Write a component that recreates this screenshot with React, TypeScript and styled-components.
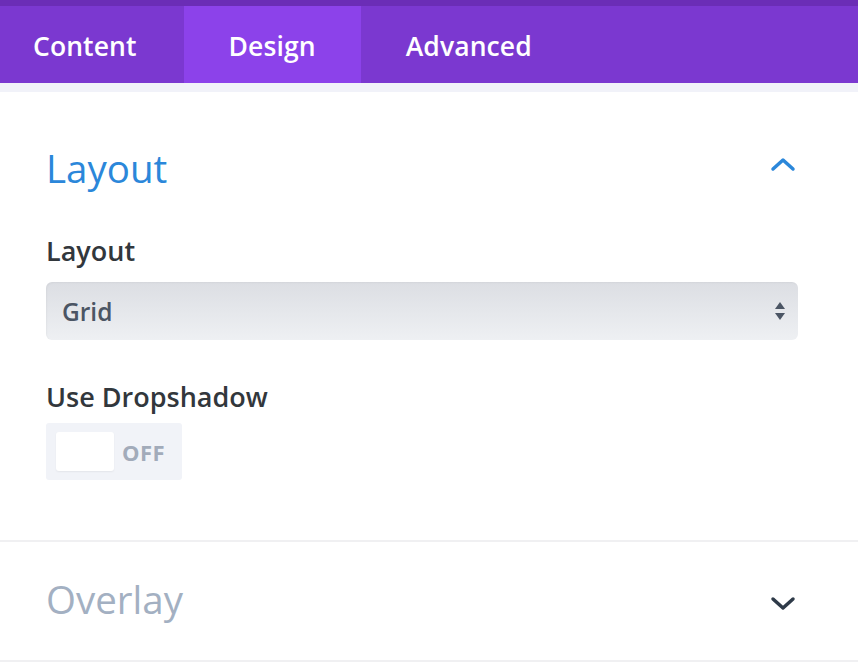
import React from "react";
import styled, { createGlobalStyle } from "styled-components";

const Global = createGlobalStyle`
  html, body { margin: 0; padding: 0; background: #fff; }
  body { font-family: "Open Sans", "Noto Sans", sans-serif; }
  * { box-sizing: border-box; }
`;

const Page = styled.div`
  width: 858px;
  height: 662px;
  overflow: hidden;
  background: #fff;
  display: flex;
  flex-direction: column;
`;

const TopStrip = styled.div`
  height: 6px;
  background: #6b2db6;
`;

const TabBar = styled.div`
  height: 78px;
  background: #7b38d0;
  display: flex;
  align-items: stretch;
`;

const Tab = styled.div<{ $active?: boolean; $first?: boolean }>`
  display: flex;
  align-items: center;
  padding: ${(p) => (p.$first ? "2px 47px 0 33px" : "2px 45px 0 45px")};
  background: ${(p) => (p.$active ? "#8c42ea" : "transparent")};
  color: #fff;
  font-size: 26.5px;
  font-weight: 600;
  letter-spacing: 0.1px;
`;

const Band = styled.div`
  height: 9px;
  background: #f1f2f9;
`;

const Section = styled.div<{ $open?: boolean }>`
  padding: ${(p) => (p.$open ? "50px 60px 60px 46px" : "31px 60px 35px 46px")};
  border-bottom: 2px solid #f0f0f2;
  display: flex;
  flex-direction: column;
`;

const SectionHead = styled.div`
  display: flex;
  align-items: center;
  justify-content: space-between;
`;

const SectionTitle = styled.h2<{ $open?: boolean }>`
  margin: 0;
  font-size: 38.5px;
  font-weight: 400;
  line-height: 52px;
  color: ${(p) => (p.$open ? "#2b87da" : "#a3b0c2")};
`;

const Chevron = styled.svg<{ $down?: boolean }>`
  width: 26px;
  height: 16px;
  margin-right: 2px;
  margin-top: ${(p) => (p.$down ? "9px" : "-8px")};
`;

const Label = styled.div`
  font-size: 27px;
  font-weight: 600;
  color: #32373c;
  line-height: 34px;
`;

const Field = styled.div<{ $mt: number }>`
  margin-top: ${(p) => p.$mt}px;
  display: flex;
  flex-direction: column;
`;

const Select = styled.div`
  margin-top: 14px;
  height: 58px;
  border-radius: 6px;
  background: linear-gradient(#dcdee3, #eef0f3);
  box-shadow: inset 1px 1px 2px rgba(0, 0, 0, 0.04);
  display: flex;
  align-items: center;
  justify-content: space-between;
  padding: 0 12px 0 16px;
  color: #4b5564;
  font-size: 24.5px;
  font-weight: 600;
`;

const Arrows = styled.svg`
  width: 12px;
  height: 22px;
`;

const Toggle = styled.div`
  margin-top: 9px;
  width: 136px;
  height: 57px;
  background: #f1f3f8;
  border-radius: 3px;
  display: flex;
  align-items: center;
  padding-left: 10px;
  gap: 8px;
`;

const Knob = styled.div`
  width: 58px;
  height: 39px;
  background: #fff;
  border-radius: 3px;
  box-shadow: 0 1px 2px rgba(0, 0, 0, 0.06);
`;

const ToggleText = styled.span`
  font-size: 22px;
  font-weight: 700;
  color: #a2abba;
  letter-spacing: 0.5px;
`;

export default function App() {
  return (
    <Page>
      <Global />
      <TopStrip />
      <TabBar>
        <Tab $first>Content</Tab>
        <Tab $active>Design</Tab>
        <Tab>Advanced</Tab>
      </TabBar>
      <Band />
      <Section $open>
        <SectionHead>
          <SectionTitle $open>Layout</SectionTitle>
          <Chevron viewBox="0 0 26 16">
            <path d="M3 13 L13 4 L23 13" fill="none" stroke="#2b87da" strokeWidth="3.5" strokeLinecap="round" strokeLinejoin="round" />
          </Chevron>
        </SectionHead>
        <Field $mt={40}>
          <Label>Layout</Label>
          <Select>
            <span>Grid</span>
            <Arrows viewBox="0 0 12 22">
              <path d="M6 2 L11 9 L1 9 Z" fill="#4b5564" />
              <path d="M6 20 L11 13 L1 13 Z" fill="#4b5564" />
            </Arrows>
          </Select>
        </Field>
        <Field $mt={40}>
          <Label>Use Dropshadow</Label>
          <Toggle>
            <Knob />
            <ToggleText>OFF</ToggleText>
          </Toggle>
        </Field>
      </Section>
      <Section>
        <SectionHead>
          <SectionTitle>Overlay</SectionTitle>
          <Chevron $down viewBox="0 0 26 16">
            <path d="M3 3 L13 12 L23 3" fill="none" stroke="#2e3a48" strokeWidth="3.5" strokeLinecap="round" strokeLinejoin="round" />
          </Chevron>
        </SectionHead>
      </Section>
    </Page>
  );
}
